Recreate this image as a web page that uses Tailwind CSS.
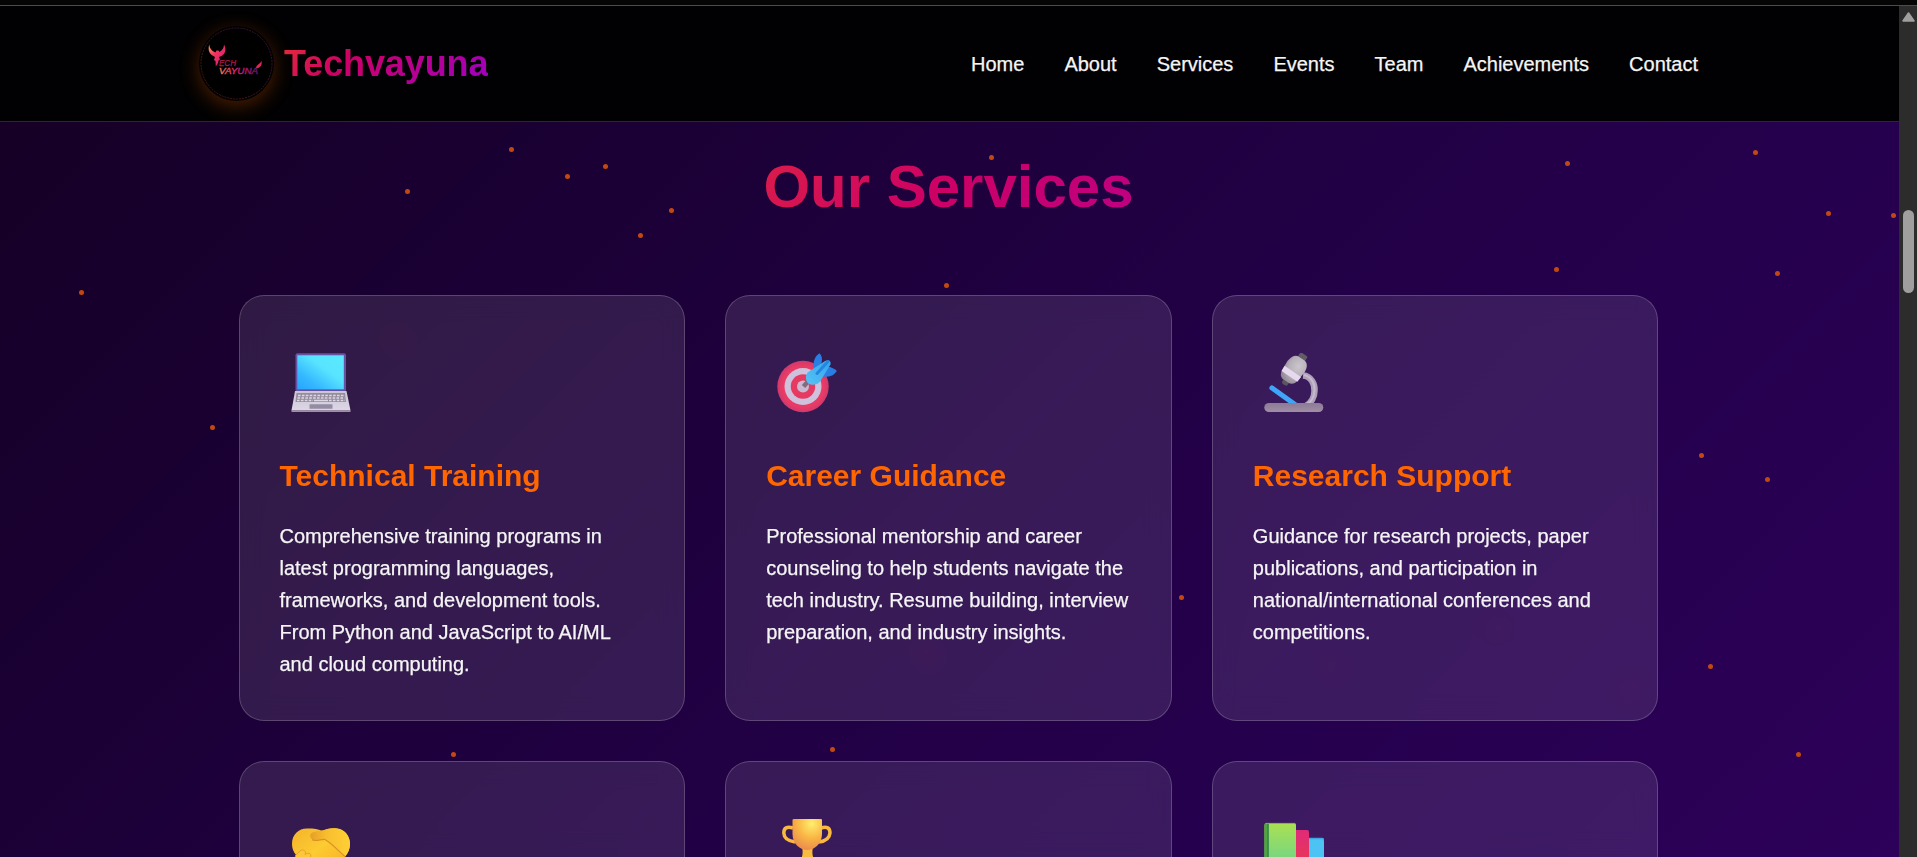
<!DOCTYPE html>
<html lang="en">
<head>
<meta charset="utf-8">
<title>Techvayuna</title>
<script src="https://cdn.jsdelivr.net/npm/@tailwindcss/browser@4"></script>
</head>
<body class="h-[857px] overflow-hidden bg-[#050505] font-['Liberation_Sans',Arial,sans-serif] text-[20px] leading-[32px] text-white">
<div class="h-[5px] bg-[#050505]"></div>
<div class="flex h-[852px] border-t border-[#4c4c4c]">
  <div class="relative h-[851px] w-[1899px] overflow-hidden bg-[linear-gradient(135deg,#150023_0%,#1a0033_25%,#220045_55%,#26004f_75%,#2d0059_100%)]">
    <div id="particles" class="absolute inset-0"></div>

    <header class="relative h-[116px] border-b border-[#4c1f05] bg-[#010002]">
      <div class="ml-[199px] flex h-[115px] w-[1499px] items-center justify-between">
        <div class="flex items-center gap-[10px] bg-[linear-gradient(135deg,#ff6600,#cc0066,#9900cc)] bg-clip-text">
          <div class="size-[75px] rounded-full bg-black shadow-[0_5px_20px_rgba(255,102,0,0.3)]">
            <svg viewBox="0 0 75 75" class="size-[75px]">
              <defs>
                <linearGradient id="lg" x1="0" y1="0" x2="1" y2="1"><stop offset="0" stop-color="#ff9a5c"/><stop offset=".4" stop-color="#f4305f"/><stop offset="1" stop-color="#c91a80"/></linearGradient>
                <linearGradient id="lt" x1="0" x2="1" y1="0" y2="0"><stop offset="0" stop-color="#ff7a4a"/><stop offset=".45" stop-color="#e01b6b"/><stop offset="1" stop-color="#5b1478"/></linearGradient>
                <linearGradient id="ring" x1="0" x2="1" y1="1" y2="0"><stop offset="0" stop-color="#5b2010"/><stop offset="1" stop-color="#43104f"/></linearGradient>
              </defs>
              <circle cx="37.500" cy="37.500" r="35.500" fill="none" stroke="url(#ring)" stroke-width=".8" stroke-dasharray="2 1"/>
              <path d="M10.200 18.500C9 23 9.500 27 13.500 29.500L16 31 15 34 16.500 35 16.800 40.500 19 37 19.500 34.500 21 33.500 20 31 22.500 30C26.500 28 27.500 23 25 18.500C25 22 23.500 24 20.500 26L19.500 24.500 17.500 24.500 16.500 26.500C13 25 10.500 22.500 10.200 18.500Z" fill="url(#lg)"/>
              <path d="M57 42.500C57 38.500 61 38 62.500 35C63.500 39.500 61 42 57 42.500Z" fill="#dd2857"/>
              <text x="20" y="40" font-family="Liberation Sans" font-style="italic" font-size="8.800" textLength="17" lengthAdjust="spacingAndGlyphs" fill="#b01c4b" stroke="#b01c4b" stroke-width=".25">ECH</text>
              <text x="20" y="48" font-family="Liberation Sans" font-style="italic" font-size="9.300" textLength="39" lengthAdjust="spacingAndGlyphs" fill="url(#lt)" stroke="url(#lt)" stroke-width=".4">VAYUNA</text>
            </svg>
          </div>
          <span class="text-[36px] leading-[58px] font-bold tracking-[-0.1px] text-transparent">Techvayuna</span>
        </div>
        <nav class="flex gap-[40px] text-[#f5f5f5] [-webkit-text-stroke:0.25px_#f5f5f5]">
          <a>Home</a><a>About</a><a>Services</a><a>Events</a><a>Team</a><a>Achievements</a><a>Contact</a>
        </nav>
      </div>
    </header>

    <main class="relative ml-[238.5px] w-[1420px] pt-[17px]">
      <h2 class="mb-[60px] bg-[linear-gradient(135deg,#ff6600,#cc0066,#9900cc)] bg-clip-text text-center text-[60px] leading-[96px] font-bold text-transparent">Our Services</h2>
      <div class="grid grid-cols-3 gap-[40px]">

        <article class="h-[426px] rounded-[25px] border border-white/20 bg-white/10 p-[40px] backdrop-blur-[12px]">
          <div class="mb-[20px] h-[96px] pt-[17px] pl-[11.5px]">
            <svg viewBox="0 0 60 60" class="size-[60px]">
              <defs><linearGradient id="scr" x1="0" y1="1" x2="1" y2="0"><stop offset="0" stop-color="#26a4ff"/><stop offset=".25" stop-color="#34b7ff"/><stop offset=".6" stop-color="#58e4ff"/><stop offset="1" stop-color="#5aeaff"/></linearGradient><linearGradient id="kb" x1="0" y1="0" x2="0" y2="1"><stop offset="0" stop-color="#cbc4d5"/><stop offset="1" stop-color="#ded6e6"/></linearGradient></defs>
              <rect x="4.500" y=".3" width="50.500" height="38.500" rx="2" fill="#6653a3"/>
              <rect x="6.300" y="2.300" width="46.500" height="34" fill="url(#scr)"/>
              <path d="M4 38H55.500L59.500 57.500H.5Z" fill="url(#kb)"/>
              <path d="M.5 57.300H59.500V59H.5Z" fill="#9b91a4"/>
              <path d="M5.500 40H54L55 49H4.500Z" fill="#948d9f"/>
              <path d="M7 42.500H53M6.500 45H53.500M6 47.500H22M38 47.500H54" stroke="#ddd7e4" stroke-width="1.500" stroke-dasharray="2.600 1.300"/>
              <path d="M23 47.500H37" stroke="#ddd7e4" stroke-width="1.500"/>
              <rect x="18.500" y="51.300" width="23" height="4.500" rx=".5" fill="#948ca2"/>
            </svg>
          </div>
          <h3 class="mb-[20px] text-[30px] leading-[48px] font-bold text-[#ff6600]">Technical Training</h3>
          <p class="text-[#f5f5f5] [-webkit-text-stroke:0.25px_#f5f5f5]">Comprehensive training programs in<br>latest programming languages,<br>frameworks, and development tools.<br>From Python and JavaScript to AI/ML<br>and cloud computing.</p>
        </article>

        <article class="h-[426px] rounded-[25px] border border-white/20 bg-white/10 p-[40px] backdrop-blur-[12px]">
          <div class="mb-[20px] h-[96px] pt-[17px] pl-[12px]">
            <svg viewBox="0 0 60 60" class="size-[60px] overflow-visible">
              <defs><radialGradient id="tg"><stop offset=".8" stop-color="#e93b65"/><stop offset="1" stop-color="#cf396d"/></radialGradient><linearGradient id="dart" x1="1" y1="0" x2="0" y2="1"><stop offset="0" stop-color="#35a2ec"/><stop offset="1" stop-color="#56c4f5"/></linearGradient></defs>
              <circle cx="25" cy="33.500" r="25.700" fill="url(#tg)"/>
              <circle cx="25" cy="33.500" r="18.500" fill="#cec1dc"/>
              <circle cx="25" cy="33.500" r="12.200" fill="#e63a62"/>
              <circle cx="25" cy="33.500" r="6" fill="#c9b9cf"/>
              <path d="M25.500 33.500L31 27.500" stroke="#806b80" stroke-width="4.500"/>
              <path d="M36 16C34.500 9 37 3 41.500 .3C44 3 44.500 6 43.500 10L38 18Z" fill="#287ee2"/>
              <path d="M47 14C51 13 56 15 58.800 18C56 22.500 51 25 44 23Z" fill="#287ee2"/>
              <path d="M29.500 19.500C26.500 24 28 31.500 34 31.800C38 32 41 30.500 43 27L52.500 11.500C53.500 8 50.500 6 47 8Z" fill="url(#dart)"/>
              <path d="M39 20.500L50 8.500" stroke="#2486df" stroke-width="3" stroke-linecap="round"/>
            </svg>
          </div>
          <h3 class="mb-[20px] text-[30px] leading-[48px] font-bold text-[#ff6600]">Career Guidance</h3>
          <p class="text-[#f5f5f5] [-webkit-text-stroke:0.25px_#f5f5f5]">Professional mentorship and career<br>counseling to help students navigate the<br>tech industry. Resume building, interview<br>preparation, and industry insights.</p>
        </article>

        <article class="h-[426px] rounded-[25px] border border-white/20 bg-white/10 p-[40px] backdrop-blur-[12px]">
          <div class="mb-[20px] h-[96px] pt-[17px] pl-[11.5px]">
            <svg viewBox="0 0 60 60" class="size-[60px]">
              <defs><radialGradient id="ms" cx=".6" cy=".3" r=".75"><stop offset="0" stop-color="#cbc5cd"/><stop offset=".6" stop-color="#b5aeb8"/><stop offset="1" stop-color="#8f8893"/></radialGradient><linearGradient id="mb" x1="0" x2="0" y1="0" y2="1"><stop offset="0" stop-color="#8c7a97"/><stop offset="1" stop-color="#a08ea5"/></linearGradient></defs>
              <path d="M39 22.500C47 23 51 31 50.500 38C50.500 44 47 50 42 53" fill="none" stroke="#aea0b7" stroke-width="6.500"/>
              <path d="M40 22C48 24 51 31 50.500 38C50 44 47 49 43 51" fill="none" stroke="#c7b9d0" stroke-width="2"/>
              <path d="M8 35L31 51.500" stroke="#3fa5f8" stroke-width="5.200" stroke-linecap="round"/>
              <g transform="rotate(34 29.500 17)">
                <rect x="25.500" y="-2" width="8.500" height="9" rx="1.500" fill="#625c66"/>
                <rect x="26.500" y="28" width="6.500" height="6.500" rx="2" fill="#5c5560"/>
                <path d="M19.500 13C20 6 23 3 26 3H33C37 3 40 7 40 13L39 23C38.500 28 36 30.500 32 30.500H27C23 30.500 20.500 28 20 23Z" fill="url(#ms)"/>
                <path d="M19.800 18.500H39.600L39.200 24.500H20.100Z" fill="#e6d8ee"/>
              </g>
              <rect x=".3" y="50" width="59" height="9" rx="4.500" fill="url(#mb)"/>
            </svg>
          </div>
          <h3 class="mb-[20px] text-[30px] leading-[48px] font-bold text-[#ff6600]">Research Support</h3>
          <p class="text-[#f5f5f5] [-webkit-text-stroke:0.25px_#f5f5f5]">Guidance for research projects, paper<br>publications, and participation in<br>national/international conferences and<br>competitions.</p>
        </article>

        <article class="h-[426px] rounded-[25px] border border-white/20 bg-white/10 p-[40px] backdrop-blur-[12px]">
          <div class="pt-[17px] pl-[12px]">
            <svg viewBox="0 0 60 60" class="size-[60px]">
              <defs>
                <linearGradient id="hs" x1="0" y1="0" x2="1" y2="1"><stop offset="0" stop-color="#f3b32a"/><stop offset=".45" stop-color="#fdcb32"/><stop offset="1" stop-color="#f7a924"/></linearGradient>
                <linearGradient id="hr" x1="0" y1="0" x2="1" y2="0"><stop offset="0" stop-color="#e59f27"/><stop offset=".4" stop-color="#f8bd2e"/><stop offset="1" stop-color="#ffd035"/></linearGradient>
              </defs>
              <path d="M0 25C0 15 7 9 16 9.500C22 9.500 26 10 30 12C36 9.500 40 9 45 9.500C53 11 58 17 58 25C58 30 56 34 53 38L35 55L15 50L4 36C1 32 0 29 0 25Z" fill="url(#hs)"/>
              <path d="M19 19C17 16 19 13 24 12.500L32 11C38 9 44 9 48 10C54 12 58 18 58 25C58 30 56 34 53 37.500C46 31 41 25 34 20.500C31 19.500 28 22 24 21.500C21 21.500 20 20.500 19 19Z" fill="url(#hr)"/>
              <path d="M20 20.800C24 23 29 20 33 20.500C40 24.500 46 31.500 53 37.500" fill="none" stroke="#cf861f" stroke-width="1.200" stroke-opacity=".8"/>
              <path d="M3 37L8 32C11 29.500 15 32 13 35.500C17 32.500 20.500 35 18 39L10 46Z" fill="#fec63a" stroke="#dc9a28" stroke-width=".8"/>
            </svg>
          </div>
        </article>

        <article class="h-[426px] rounded-[25px] border border-white/20 bg-white/10 p-[40px] backdrop-blur-[12px]">
          <div class="pt-[17px] pl-[11.5px]">
            <svg viewBox="0 0 60 60" class="size-[60px]">
              <defs><radialGradient id="tr" cx=".65" cy=".15" r=".95"><stop offset="0" stop-color="#ffee6e"/><stop offset=".5" stop-color="#f9b544"/><stop offset="1" stop-color="#e78351"/></radialGradient></defs>
              <path d="M15 9C9 7 5.800 9 5.800 14C6 19 10 22 17 23M43 9C49 7 52 9 52 14C51.500 19 48 22 41 23" fill="none" stroke="#f9b83f" stroke-width="3.500"/>
              <path d="M24 28H35C33 36 36 42 40 47H19C23 42 26 36 24 28Z" fill="#f8bb40"/>
              <path d="M16 0H43Q44 0 44 1V15C44 25 36 31 29.500 31C22 31 14.500 25 14.500 15V1Q14.500 0 16 0Z" fill="url(#tr)"/>
            </svg>
          </div>
        </article>

        <article class="h-[426px] rounded-[25px] border border-white/20 bg-white/10 p-[40px] backdrop-blur-[12px]">
          <div class="pt-[17px] pl-[11.5px]">
            <svg viewBox="0 0 60 60" class="size-[60px]">
              <defs><linearGradient id="b1" x1="0" x2="0" y1="0" y2="1"><stop offset="0" stop-color="#abe052"/><stop offset=".65" stop-color="#76d681"/><stop offset="1" stop-color="#60d0a5"/></linearGradient><linearGradient id="b2" x1="0" x2="0" y1="0" y2="1"><stop offset="0" stop-color="#df2b78"/><stop offset="1" stop-color="#ee3d46"/></linearGradient></defs>
              <path d="M42 19.500H58Q60 19.500 60 21.500V60H42Z" fill="#4cc3f2"/>
              <path d="M42 19.500H58Q60 19.500 60 21.500" fill="none" stroke="#3ba8df" stroke-width="1.500"/>
              <path d="M30 11H43Q45 11 45 13V60H30Z" fill="url(#b2)"/>
              <path d="M.5 6Q.5 4 2.500 4H30Q32 4 32 6V60H.5Z" fill="url(#b1)"/>
              <path d="M.5 6Q.5 4 2.500 4H4.500V60H.5Z" fill="#4da53d"/>
              <path d="M4 5V60" stroke="#348450" stroke-width="1.500"/>
              <path d="M2 4.400H31" stroke="#79b733" stroke-width="1"/>
            </svg>
          </div>
        </article>
      </div>
    </main>
  </div>

  <div class="flex w-[18px] flex-col items-center bg-[#2c2c2c] pt-[6px]">
    <svg viewBox="0 0 13 10" class="h-[10px] w-[13px]"><path d="M6.500 1.200L11.700 8.800H1.300Z" fill="#9f9f9f" stroke="#9f9f9f" stroke-width="2" stroke-linejoin="round"/></svg>
    <div class="mt-[188px] h-[83px] w-[11px] rounded-full bg-[#9f9f9f]"></div>
  </div>
</div>
<script>
  const spots = [[511,149.500],[407,191],[567,176],[605,166],[671,210.500],[640,235],[991.500,157],[946.500,285.500],[81.500,292.500],[212,427.500],[1567.500,163.500],[1755.500,152.500],[1828.500,213],[1893.500,215.500],[1556.500,269],[1777.500,273],[1701,455],[1767.500,479],[1181,597.500],[1710,666.500],[1798.500,754.500],[453.500,754.500],[832.500,749.500],[395,337],[1630,690],[1497,628],[1330,664],[925,652]];
  document.getElementById('particles').innerHTML = spots.map(([x, y]) =>
    `<i class="absolute size-[5px] rounded-full bg-[#c14911]" style="left:${x - 2.5}px;top:${y - 8.5}px"></i>`).join('');
</script>
</body>
</html>
